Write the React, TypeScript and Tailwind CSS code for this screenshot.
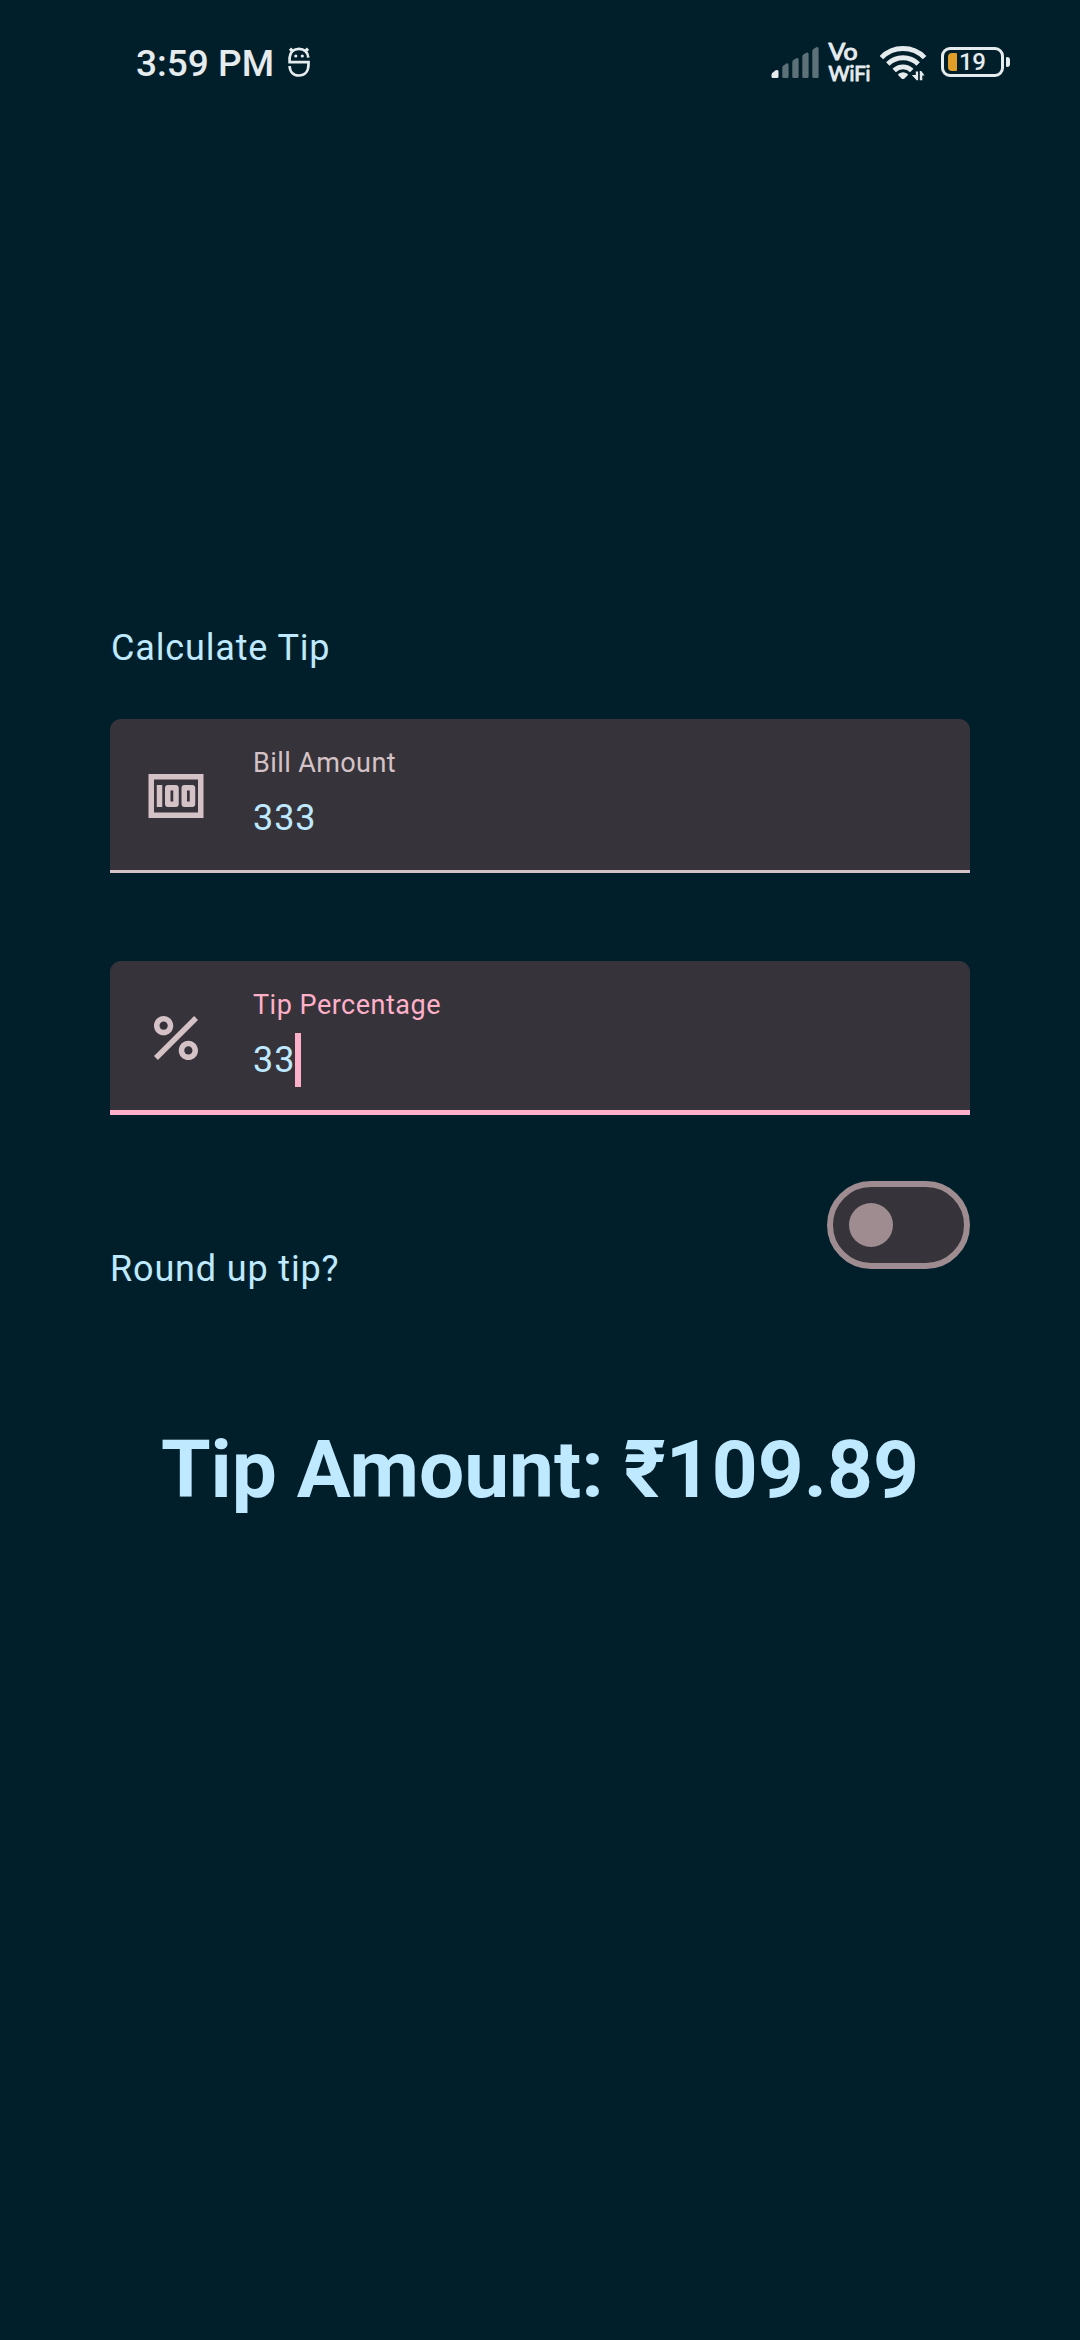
import React, { useState } from "react";

function MascotIcon() {
  return (
    <svg width="24" height="32" viewBox="287 47 24 32" fill="none" stroke="#e6ebee" strokeWidth="2.7">
      <path d="M290 48.600l2.400 2.400M308 48.600l-2.400 2.400" strokeWidth="3.200" />
      <path d="M308.300 57.600C307.800 52 304 48.800 299 48.800S290 52 289.600 57.600V62.200H308.500V64.500C308.500 71.500 304.500 75.500 299 75.500S289.800 72 289.600 66" />
      <circle cx="295.800" cy="56" r="1.600" fill="#e6ebee" stroke="none" />
      <circle cx="302.300" cy="56" r="1.600" fill="#e6ebee" stroke="none" />
    </svg>
  );
}

function SignalIcon() {
  return (
    <svg width="48" height="32" viewBox="771 47 48 32" fill="#e6ebee">
      <path d="M771.500 75q0-1.500 1-2.300l3.200-2.400q2.800-1.200 2.800 1.500V76.500q0 1.500-1.500 1.500h-4q-1.500 0-1.500-1.500z" />
      <g opacity="0.4">
        <path d="M782.300 68q0-2 1.500-2.800l2.500-1.700q2.300-.8 2.300 1.400V76.500q0 1.500-1.500 1.500h-3.300q-1.500 0-1.500-1.500z" />
        <path d="M792.300 62.500q0-2 1.500-2.800l2.500-1.400q2.300-.8 2.300 1.400V76.500q0 1.500-1.500 1.500h-3.300q-1.500 0-1.500-1.500z" />
        <path d="M802.300 57q0-2 1.500-2.800l2.500-1.500q2.300-.8 2.300 1.400V76.500q0 1.500-1.500 1.500h-3.300q-1.500 0-1.500-1.500z" />
        <path d="M812.300 51.500q0-2 1.500-2.800l2.500-1.400q2.300-.8 2.300 1.400V76.500q0 1.500-1.500 1.500h-3.300q-1.500 0-1.500-1.500z" />
      </g>
    </svg>
  );
}

function VoWifi() {
  return (
    <svg
      width="44"
      height="44"
      viewBox="827 41 44 44"
      className="overflow-visible"
      fill="#e6ebee"
      stroke="#e6ebee"
      strokeWidth="1"
      strokeLinejoin="round"
      fontFamily="Lato, sans-serif"
      fontWeight="400"
    >
      <text x="828.500" y="59.500" fontSize="22.500" textLength="29" lengthAdjust="spacingAndGlyphs">Vo</text>
      <text x="828.500" y="80.500" fontSize="20.500" textLength="42" lengthAdjust="spacingAndGlyphs">WiFi</text>
    </svg>
  );
}

function WifiIcon() {
  return (
    <svg width="48" height="36" viewBox="879 45 48 36" fill="none" stroke="#e6ebee" strokeWidth="4.9">
      <path d="M881.400 57.600A30.200 30.200 0 0 1 924.600 57.600" />
      <path d="M887.800 64A21.700 21.700 0 0 1 918.200 64" />
      <path d="M894.200 70.400A12.700 12.700 0 0 1 911.800 70.400" />
      <path d="M898.500 73.800Q903 70.800 907.500 73.800Q908.300 74.600 907.500 75.500L904.500 78.400Q903 79.600 901.500 78.400L898.500 75.500Q897.700 74.600 898.500 73.800Z" fill="#e6ebee" stroke="none" />
      <path d="M915.800 71.500h2.300V80.200h-1.500L911.800 75h4zM919.800 80.200V71h1.500L924.600 75.500h-2.300V80.200z" fill="#e6ebee" stroke="none" />
    </svg>
  );
}

function Battery({ level }: { level: number }) {
  return (
    <div className="mb-[2px] flex items-center">
      <div className="flex h-[30px] w-[63px] items-center rounded-[9px] border-[3px] border-[#e6ebee] pl-1">
        <span className="h-[18px] w-[9px] rounded-l-[4px] rounded-r-[1px] bg-[#e29f28]" />
        <span className="ml-[2px] text-[24px] leading-none font-medium tracking-[-0.300px] text-[#e6ebee]">{level}</span>
      </div>
      <span className="ml-[2px] h-[10px] w-[4px] rounded-l-[1px] rounded-r-[3px] bg-[#e6ebee]" />
    </div>
  );
}

function MoneyIcon() {
  return (
    <svg width="66" height="66" viewBox="0 0 24 24" fill="#d5c2c6">
      <path fillRule="evenodd" d="M15 8h3c.55 0 1 .45 1 1v6c0 .55-.45 1-1 1h-3c-.55 0-1-.45-1-1V9c0-.55.45-1 1-1zm1 6h1v-4h-1zM9 8h3c.55 0 1 .45 1 1v6c0 .55-.45 1-1 1H9c-.55 0-1-.45-1-1V9c0-.55.45-1 1-1zm1 6h1v-4h-1zM5 8h2v8H5zM2 4v16h20V4zm2 14V6h16v12z" />
    </svg>
  );
}

function PercentIcon() {
  return (
    <svg width="66" height="66" viewBox="0 0 24 24" fill="#d5c2c6">
      <path d="M7.500 4C5.570 4 4 5.570 4 7.500S5.570 11 7.500 11 11 9.430 11 7.500 9.430 4 7.500 4zm0 5C6.670 9 6 8.330 6 7.500S6.670 6 7.500 6 9 6.670 9 7.500 8.330 9 7.500 9zM16.500 13c-1.930 0-3.500 1.570-3.500 3.500s1.570 3.500 3.500 3.500 3.500-1.570 3.500-3.500-1.570-3.500-3.500-3.500zm0 5c-.83 0-1.500-.67-1.500-1.500s.67-1.500 1.500-1.500 1.500.67 1.500 1.500-.67 1.500-1.500 1.500zM5.410 20L4 18.590 18.590 4 20 5.410z" />
    </svg>
  );
}

type FieldProps = { icon: React.ReactNode; label: string; value: string; focused?: boolean };

function Field({ icon, label, value, focused }: FieldProps) {
  return (
    <div className="flex h-[154px] flex-col rounded-t-[11px] bg-[#36343a]">
      <div className="flex h-0 grow pl-[33px]">
        <div className="mt-11 h-[66px] w-[66px]">{icon}</div>
        <div className="ml-11 pt-[22px]">
          <div
            className={
              focused
                ? "h-[44px] text-[27px] leading-[44px] tracking-[0.500px] text-[#ffb0c9]"
                : "h-[44px] text-[27px] leading-[44px] tracking-[0.400px] text-[#d5c2c6]"
            }
          >
            {label}
          </div>
          <div className="flex h-[66px] items-center text-[36px] tracking-[0.950px]">
            <span>{value}</span>
            {focused && <span className="h-[54px] w-[6px] bg-[#ffb0c9]" />}
          </div>
        </div>
      </div>
      <div className={focused ? "h-[5.500px] bg-[#ffb0c9]" : "h-[3px] bg-[#d5c2c6]"} />
    </div>
  );
}

export default function App() {
  const [roundUp, setRoundUp] = useState(false);
  return (
    <div className="flex h-[2340px] w-[1080px] flex-col bg-[#001f2a] font-['Roboto',sans-serif] text-[#bfe9ff]">
      <header className="flex h-[126px] items-center pr-[70px] pl-[136px] text-[#e6ebee]">
        <span className="text-[37px] leading-none font-medium">3:59 PM</span>
        <span className="ml-[13px]"><MascotIcon /></span>
        <div className="ml-auto flex items-center">
          <SignalIcon />
          <span className="ml-2"><VoWifi /></span>
          <span className="ml-2"><WifiIcon /></span>
          <span className="ml-[14px]"><Battery level={19} /></span>
        </div>
      </header>
      <main className="flex flex-col px-[110px] pt-[494px]">
        <h1 className="h-[99px] pl-px text-[36px] leading-[56px] tracking-[0.850px]">Calculate Tip</h1>
        <Field icon={<MoneyIcon />} label="Bill Amount" value="333" />
        <div className="h-[88px]" />
        <Field icon={<PercentIcon />} label="Tip Percentage" value="33" focused />
        <div className="mt-[66px] flex h-[132px] justify-between">
          <span className="pt-[60px] text-[36px] leading-[56px] tracking-[0.850px]">Round up tip?</span>
          <button
            type="button"
            role="switch"
            aria-checked={roundUp}
            aria-label="Round up tip?"
            onClick={() => setRoundUp(!roundUp)}
            className={
              roundUp
                ? "flex h-[88px] w-[143px] items-center justify-end rounded-full border-[6px] border-[#9e8c90] bg-[#36343a] px-4"
                : "flex h-[88px] w-[143px] items-center rounded-full border-[6px] border-[#9e8c90] bg-[#36343a] px-4"
            }
          >
            <span className="h-11 w-11 rounded-full bg-[#9e8c90]" />
          </button>
        </div>
        <p className="mt-[105px] text-center text-[80.200px] leading-[104px] font-bold whitespace-nowrap">Tip Amount: ₹109.89</p>
      </main>
    </div>
  );
}
